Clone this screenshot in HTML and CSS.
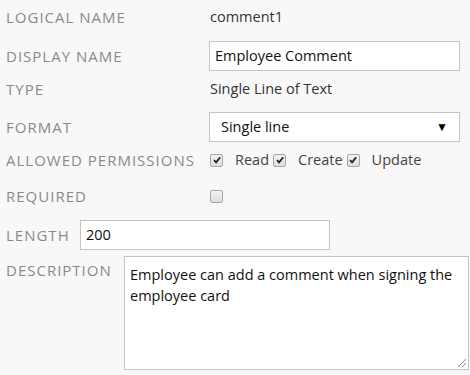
FILE: index.html
```html
<!DOCTYPE html>
<html>
<head>
<meta charset="utf-8">
<link rel="stylesheet" href="styles.css">
</head>
<body>
<div class="form">
  <div class="row r1">
    <div class="label">Logical name</div>
    <div class="value">comment1</div>
  </div>
  <div class="row r2">
    <div class="label">Display name</div>
    <div class="input wide">Employee Comment</div>
  </div>
  <div class="row r3">
    <div class="label">Type</div>
    <div class="value">Single Line of Text</div>
  </div>
  <div class="row r4">
    <div class="label">Format</div>
    <div class="input wide select"><span>Single line</span><span class="arrow">▼</span></div>
  </div>
  <div class="row r5">
    <div class="label">Allowed permissions</div>
    <div class="perms">
      <span class="cb checked"><svg viewBox="0 0 10 10" width="10" height="10"><path d="M2 5.2 L4.1 7.3 L8.2 2.3" fill="none" stroke="#222" stroke-width="1.8"/></svg></span><span class="plabel">Read</span>
      <span class="cb checked"><svg viewBox="0 0 10 10" width="10" height="10"><path d="M2 5.2 L4.1 7.3 L8.2 2.3" fill="none" stroke="#222" stroke-width="1.8"/></svg></span><span class="plabel">Create</span>
      <span class="cb checked"><svg viewBox="0 0 10 10" width="10" height="10"><path d="M2 5.2 L4.1 7.3 L8.2 2.3" fill="none" stroke="#222" stroke-width="1.8"/></svg></span><span class="plabel">Update</span>
    </div>
  </div>
  <div class="row r6">
    <div class="label">Required</div>
    <span class="cb"></span>
  </div>
  <div class="row r7">
    <div class="label len">Length</div>
    <div class="input length">200</div>
  </div>
  <div class="row r8">
    <div class="label desc">Description</div>
    <div class="textarea">Employee can add a comment when signing the employee card<svg class="grip" viewBox="0 0 12 12" width="12" height="12"><path d="M11 3 L3 11 M11 7 L7 11" stroke="#888" stroke-width="1"/></svg></div>
  </div>
</div>
</body>
</html>
```
FILE: styles.css
```css
html, body {
  margin: 0;
  padding: 0;
  background: #f8f8f8;
}
body {
  font-family: "Open Sans", "Noto Sans", sans-serif;
  font-size: 14.5px;
  color: #333;
  width: 470px;
  height: 375px;
  overflow: hidden;
}
.form {
  display: flex;
  flex-direction: column;
}
.row {
  display: flex;
  align-items: center;
  line-height: 20px;
}
.label {
  box-sizing: border-box;
  width: 209px;
  padding-left: 6px;
  flex: none;
  text-transform: uppercase;
  letter-spacing: 1px;
  color: #8a8a8a;
  font-size: 15px;
}
.label.len {
  width: 80px;
}
.label.desc {
  width: 124px;
  margin-top: 4px;
}
.r1 { margin-top: 7px; }
.r2 { margin-top: 14px; }
.r3 { margin-top: 8px; }
.r4 { margin-top: 13px; }
.r5 { margin-top: 8px; }
.r6 { margin-top: 16px; }
.r7 { margin-top: 14px; }
.r8 { margin-top: 6px; align-items: flex-start; }
.value {
  padding-left: 1px;
}
.input {
  box-sizing: border-box;
  height: 30px;
  background: #fff;
  border: 1px solid #c4c4c4;
  color: #111;
  padding: 0 5px;
  display: flex;
  align-items: center;
}
.input.wide {
  width: 251px;
}
.select {
  justify-content: space-between;
  padding: 0 11px 0 11px;
}
.arrow {
  font-size: 12px;
  color: #000;
}
.input.length {
  width: 250px;
}
.perms {
  display: flex;
  align-items: center;
}
.cb {
  box-sizing: border-box;
  width: 13px;
  height: 13px;
  border: 1px solid #a6a6a6;
  border-radius: 2px;
  background: linear-gradient(#f2f2f2, #dedede);
  display: inline-flex;
  align-items: center;
  justify-content: center;
  margin-left: 1px;
}
.perms .cb {
  margin-right: 12px;
}
.plabel {
  margin-right: 3px;
  color: #444;
}
.textarea {
  box-sizing: border-box;
  position: relative;
  width: 345px;
  height: 114px;
  background: #fff;
  border: 1px solid #c4c4c4;
  color: #111;
  padding: 7px 5px 5px 5px;
  line-height: 21px;
}
.grip {
  position: absolute;
  right: 1px;
  bottom: 1px;
}
```
